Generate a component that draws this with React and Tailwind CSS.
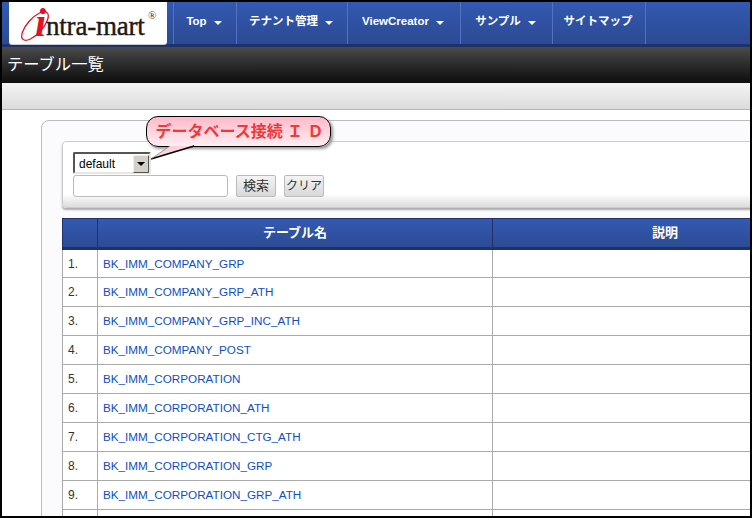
const font = "font-['Liberation_Sans','Noto_Sans_CJK_JP',sans-serif]";

const menus = [
  { label: "Top", width: "w-[63px]", caret: true },
  { label: "テナント管理", width: "w-[111px]", caret: true },
  { label: "ViewCreator", width: "w-[113px]", caret: true },
  { label: "サンプル", width: "w-[92px]", caret: true },
  { label: "サイトマップ", width: "w-[93px]", caret: false },
];

const tables = [
  "BK_IMM_COMPANY_GRP",
  "BK_IMM_COMPANY_GRP_ATH",
  "BK_IMM_COMPANY_GRP_INC_ATH",
  "BK_IMM_COMPANY_POST",
  "BK_IMM_CORPORATION",
  "BK_IMM_CORPORATION_ATH",
  "BK_IMM_CORPORATION_CTG_ATH",
  "BK_IMM_CORPORATION_GRP",
  "BK_IMM_CORPORATION_GRP_ATH",
];

const Logo = () => (
  <div className="relative ml-[7px] h-[42px] w-[158px] shrink-0 rounded-b-[3px] bg-white shadow-[0_1px_0_#c8c8c8]">
    <svg className="absolute left-0 top-0" width="60" height="42" viewBox="0 0 60 42">
      <ellipse cx="26" cy="24" rx="7.5" ry="18" transform="rotate(42 26 24)" fill="none" stroke="#e3101f" strokeWidth="1.3" />
    </svg>
    <span className="absolute left-[26px] top-[1px] font-['Liberation_Serif',serif] text-[40px] font-bold italic leading-[40px] text-[#e3101f]">
      i
    </span>
    <span className="absolute left-[37px] top-[9px] font-['Liberation_Serif',serif] text-[27px] leading-[30px] tracking-[-0.2px] text-[#231815] [-webkit-text-stroke:0.4px_#231815]">
      ntra-mart
    </span>
    <span className="absolute left-[139px] top-[7px] font-['Liberation_Serif',serif] text-[11px] leading-[12px] text-[#333]">®</span>
  </div>
);

const Nav = () => (
  <div className="flex h-[45px] shrink-0 border-b-[3px] border-[#1f3268] bg-gradient-to-b from-[#3459b2] to-[#2b4a92]">
    <Logo />
    <div className="ml-[6px] flex border-l border-[#5273c4]">
      {menus.map((m) => (
        <div
          key={m.label}
          className={`${m.width} flex items-start justify-center gap-[7px] border-r border-r-[#5273c4] pr-[2px] pt-[12px] text-[11.5px] font-bold leading-[14px] text-white`}
        >
          {m.label}
          {m.caret && <span className="mt-[7px] h-0 w-0 border-x-[4px] border-t-[4px] border-x-transparent border-t-white"></span>}
        </div>
      ))}
    </div>
  </div>
);

const Callout = () => (
  <>
    <svg className="absolute left-[146px] top-[138px] z-20" width="60" height="24" viewBox="0 0 60 24">
      <path d="M3 19 L22 6 L46 6 Z" fill="#fbd3de" />
      <path d="M3 19 L46 6" stroke="#000" strokeWidth="1.5" fill="none" />
      <path d="M3 19 L22 6" stroke="#888" strokeWidth="0.8" fill="none" />
    </svg>
    <div className="absolute left-[144px] top-[114px] z-10 flex h-[31px] w-[185px] items-center justify-center rounded-[12px] border border-black bg-gradient-to-b from-[#ffb9ca] to-[#fdeef2] pl-[2px] text-base font-bold text-[#ef3a3a] shadow-[2px_2px_3px_#999]">
      データベース接続 Ｉ Ｄ
    </div>
  </>
);

const SearchPanel = () => (
  <div className="w-[776px] rounded-[4px] border border-[#ccc] bg-gradient-to-b from-white from-[80%] to-[#dcdcdc] px-[10px] pb-[10px] pt-[10px] shadow-[0_2px_2px_#aaa]">
    <div className="flex h-[22px] w-[78px] items-center justify-between rounded-[2px] border-2 border-b-[#e8e6e0] border-l-[#555] border-r-[#e8e6e0] border-t-[#555] pl-[4px] pt-px text-xs text-black">
      default
      <span className="flex h-[18px] w-[16px] items-center justify-center border border-b-[#555] border-l-[#eee] border-r-[#555] border-t-[#eee] bg-[#d4d0c8]">
        <span className="h-0 w-0 border-x-[4px] border-t-[4px] border-x-transparent border-t-black"></span>
      </span>
    </div>
    <div className="mt-px flex items-center">
      <input className="h-[22px] w-[155px] rounded-[3px] border border-[#bbb] bg-white" />
      <button className="ml-[8px] h-[22px] w-[40px] whitespace-nowrap rounded-[2px] border border-[#bbb] bg-gradient-to-b from-[#f4f4f4] to-[#d8d8d8] text-[13px] text-[#333]">
        検索
      </button>
      <button className="ml-[8px] h-[22px] w-[40px] whitespace-nowrap rounded-[2px] border border-[#bbb] bg-gradient-to-b from-[#f4f4f4] to-[#d8d8d8] text-[12px] text-[#333]">
        クリア
      </button>
    </div>
  </div>
);

const TableList = () => (
  <table className="mt-[10px] w-[776px] table-fixed border-collapse text-[11.7px]">
    <thead>
      <tr className="h-[30px] bg-gradient-to-b from-[#3459b2] to-[#2b4a92] text-[13px] font-bold text-white">
        <th className="w-[35px] border-x border-b-[3px] border-t border-[#1f3268]"></th>
        <th className="w-[395px] border-x border-b-[3px] border-t border-[#1f3268] font-bold">テーブル名</th>
        <th className="border-x border-b-[3px] border-t border-[#1f3268] font-bold">説明</th>
      </tr>
    </thead>
    <tbody className="bg-white">
      {tables.map((name, i) => (
        <tr key={name} className="h-[29px]">
          <td className="border border-[#aaa] pl-[5px] text-xs text-[#333]">{i + 1}.</td>
          <td className="border border-[#aaa] pl-[5px] text-[#0f4fc4]">{name}</td>
          <td className="border border-[#aaa]"></td>
        </tr>
      ))}
      <tr className="h-[29px]">
        <td className="border border-[#aaa]"></td>
        <td className="border border-[#aaa]"></td>
        <td className="border border-[#aaa]"></td>
      </tr>
    </tbody>
  </table>
);

export default function App() {
  return (
    <div className={`${font} relative flex h-[518px] w-[752px] flex-col overflow-hidden border-2 border-black bg-white`}>
      <Nav />
      <div className="flex h-[36px] shrink-0 items-center bg-gradient-to-b from-[#4b4b4b] to-[#0e0e0e] pb-[2px] pl-[5px] text-[16.3px] text-white">
        テーブル一覧
      </div>
      <div className="h-[27px] shrink-0 border-b border-[#b5b5b5] bg-gradient-to-b from-[#f3f3f3] to-[#dcdcdc]"></div>
      <div className="ml-[39px] mt-[10px] w-[840px] shrink-0 rounded-tl-[8px] border border-[#bbb] bg-[#fbfbfe] p-[20px]">
        <SearchPanel />
        <TableList />
      </div>
      <Callout />
    </div>
  );
}
